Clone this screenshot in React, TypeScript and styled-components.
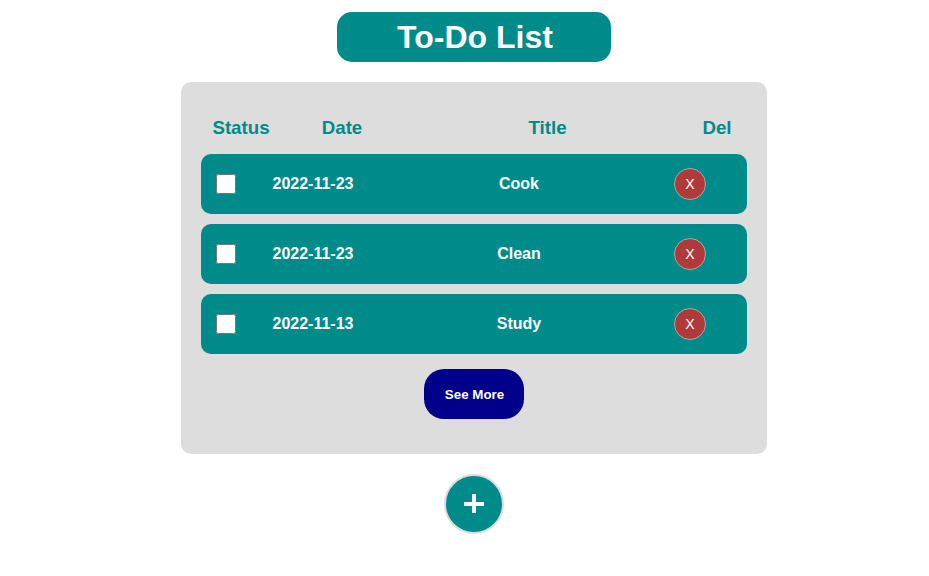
import React from "react";
import styled, { createGlobalStyle } from "styled-components";

const GlobalStyle = createGlobalStyle`
  * { box-sizing: border-box; }
  body { margin: 0; background: #fff; font-family: "Liberation Sans", Arial, sans-serif; }
`;
const Page = styled.main`
  width: 586px;
  margin: 0 0 0 181px;
  padding-top: 12px;
  display: flex;
  flex-direction: column;
  align-items: center;
`;
const Heading = styled.h1`
  width: 274px;
  height: 50px;
  margin: 0 0 20px;
  padding-left: 2px;
  border-radius: 15px;
  background: #008b8b;
  color: #fff;
  font-size: 32px;
  line-height: 50px;
  text-align: center;
`;
const Panel = styled.section`
  width: 100%;
  height: 372px;
  padding: 20px;
  border-radius: 10px;
  background: #ddd;
  display: flex;
  flex-direction: column;
  align-items: center;
`;
const Columns = styled.div`
  width: 100%;
  height: 52px;
  padding-top: 15px;
  display: grid;
  grid-template-columns: 80px 122px 289px 50px;
  color: #008b8b;
  font-size: 18.72px;
  font-weight: bold;
  line-height: 21px;
  text-align: center;
`;
const Tasks = styled.ul`
  width: 100%;
  margin: 0;
  padding: 0;
  display: grid;
  gap: 10px;
  list-style: none;
`;
const Task = styled.li`
  height: 60px;
  padding-left: 15px;
  display: grid;
  grid-template-columns: 20px 154px 258px 84px;
  align-items: center;
  border-radius: 10px;
  background: #008b8b;
  color: #fff;
  font-size: 16px;
  font-weight: bold;
  text-align: center;
`;
const Check = styled.input`
  width: 20px;
  height: 20px;
  margin: 0;
`;
const Remove = styled.button`
  width: 32px;
  height: 32px;
  padding: 0;
  justify-self: center;
  border: 1px solid #a9a9a9;
  border-radius: 50%;
  background: #b03a3a;
  color: #fff;
  font: 14px "Liberation Sans", sans-serif;
`;
const More = styled.button`
  width: 100px;
  height: 50px;
  margin-top: 15px;
  padding: 0 0 0 1px;
  border: 0;
  border-radius: 20px;
  background: #00008b;
  color: #fff;
  font: bold 13.333px "Liberation Sans", sans-serif;
`;
const Add = styled.button`
  width: 60px;
  height: 60px;
  margin-top: 20px;
  padding: 0;
  display: grid;
  place-items: center;
  border: 2px solid #ddd;
  border-radius: 50%;
  background: #008b8b;
  color: #fff;
`;

const tasks = [
  { date: "2022-11-23", title: "Cook" },
  { date: "2022-11-23", title: "Clean" },
  { date: "2022-11-13", title: "Study" },
];

export default function App() {
  return (
    <>
      <GlobalStyle />
      <Page>
        <Heading>To-Do List</Heading>
        <Panel>
          <Columns><span>Status</span><span>Date</span><span>Title</span><span>Del</span></Columns>
          <Tasks>
            {tasks.map((task) => (
              <Task key={task.title}>
                <Check type="checkbox" aria-label={task.title} />
                <span>{task.date}</span>
                <span>{task.title}</span>
                <Remove>X</Remove>
              </Task>
            ))}
          </Tasks>
          <More>See More</More>
        </Panel>
        <Add aria-label="Add task">
          <svg width="20" height="20" viewBox="0 0 20 20"><path d="M10 0v19M0 10h20" stroke="currentColor" strokeWidth="4" /></svg>
        </Add>
      </Page>
    </>
  );
}
